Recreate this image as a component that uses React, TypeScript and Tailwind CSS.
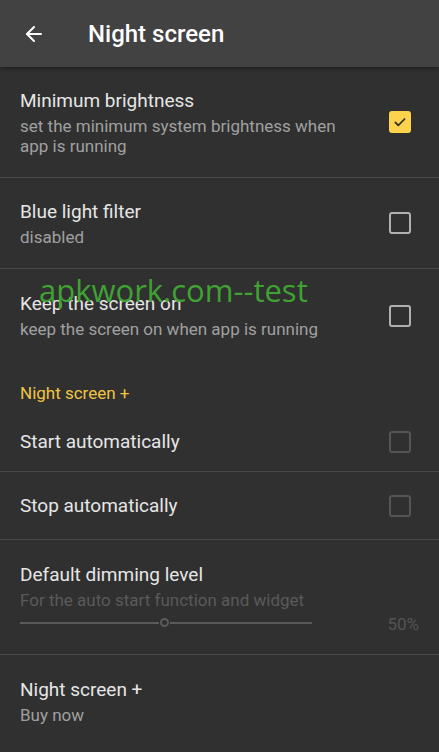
import { ArrowLeft } from "lucide-react";

function Checkbox({ checked, dim }: { checked?: boolean; dim?: boolean }) {
  if (checked) {
    return (
      <div className="w-[22px] h-[22px] rounded-[3px] bg-[#fdd34d] flex items-center justify-center">
        <svg width="16" height="16" viewBox="0 0 24 24" fill="none" stroke="#2f2f2f" strokeWidth="2.6" strokeLinecap="round" strokeLinejoin="round">
          <path d="M5 12.5l4.5 4.5L19 7.5" />
        </svg>
      </div>
    );
  }
  return (
    <div
      className={`w-[22px] h-[22px] rounded-[3px] border-2 ${dim ? "border-[#555555]" : "border-[#b0b0b0]"}`}
    />
  );
}

function Row({
  title,
  sub,
  checked,
  dim,
  className,
}: {
  title: string;
  sub?: string;
  checked?: boolean;
  dim?: boolean;
  className?: string;
}) {
  return (
    <div className={`flex items-center pl-5 pr-7 ${className ?? ""}`}>
      <div className="flex-1 pr-10">
        <p className="text-[19px] leading-[24px] text-[#e6e6e6]">{title}</p>
        {sub && <p className="text-[17px] leading-[20px] text-[#a0a0a0] mt-[3px]">{sub}</p>}
      </div>
      <Checkbox checked={checked} dim={dim} />
    </div>
  );
}

export default function App() {
  return (
    <main className="relative w-[439px] h-[752px] overflow-hidden bg-[#303030]" style={{ fontFamily: "Roboto, sans-serif" }}>
      {/* --- Toolbar --- */}
      <header className="h-[67px] bg-[#424242] flex items-center shadow-[0_2px_4px_rgba(0,0,0,0.35)] relative z-10">
        <ArrowLeft className="ml-[22px] text-white" size={24} strokeWidth={2} />
        <h1 className="ml-[42px] text-[24px] font-medium text-white">Night screen</h1>
      </header>

      <Row
        title="Minimum brightness"
        sub="set the minimum system brightness when app is running"
        checked
        className="h-[111px] border-b border-[#474747]"
      />
      <Row title="Blue light filter" sub="disabled" className="h-[91px] border-b border-[#474747]" />
      <Row title="Keep the screen on" sub="keep the screen on when app is running" className="h-[93px]" />

      <p className="pl-5 pt-[21px] h-[50px] text-[17px] leading-[20px] text-[#f0c542]">Night screen +</p>

      <Row title="Start automatically" dim className="h-[60px] border-b border-[#474747]" />
      <Row title="Stop automatically" dim className="h-[68px] border-b border-[#474747]" />

      {/* --- Dimming slider --- */}
      <div className="h-[115px] pl-5 pr-5 pt-[23px] border-b border-[#474747]">
        <p className="text-[19px] leading-[24px] text-[#e6e6e6]">Default dimming level</p>
        <p className="text-[17px] leading-[20px] text-[#5a5a5a] mt-[3px]">For the auto start function and widget</p>
        <div className="flex items-center -mt-[2px]">
          <div className="flex items-center w-[292px]">
            <div className="h-[2px] w-[139px] bg-[#5a5a5a]" />
            <div className="w-[9px] h-[9px] rounded-full border-2 border-[#5a5a5a] mx-[1px]" />
            <div className="h-[2px] flex-1 bg-[#5a5a5a]" />
          </div>
          <span className="ml-auto text-[17px] text-[#545454] mt-[4px]">50%</span>
        </div>
      </div>

      <div className="pl-5 pt-[23px]">
        <p className="text-[19px] leading-[24px] text-[#e6e6e6]">Night screen +</p>
        <p className="text-[17px] leading-[20px] text-[#a0a0a0] mt-[3px]">Buy now</p>
      </div>

      {/* watermark */}
      <div
        className="absolute left-[39px] top-[267px] text-[31px] text-[#3fa232] z-20"
        style={{ fontFamily: "'Open Sans', sans-serif" }}
      >
        apkwork.com--test
      </div>
    </main>
  );
}
